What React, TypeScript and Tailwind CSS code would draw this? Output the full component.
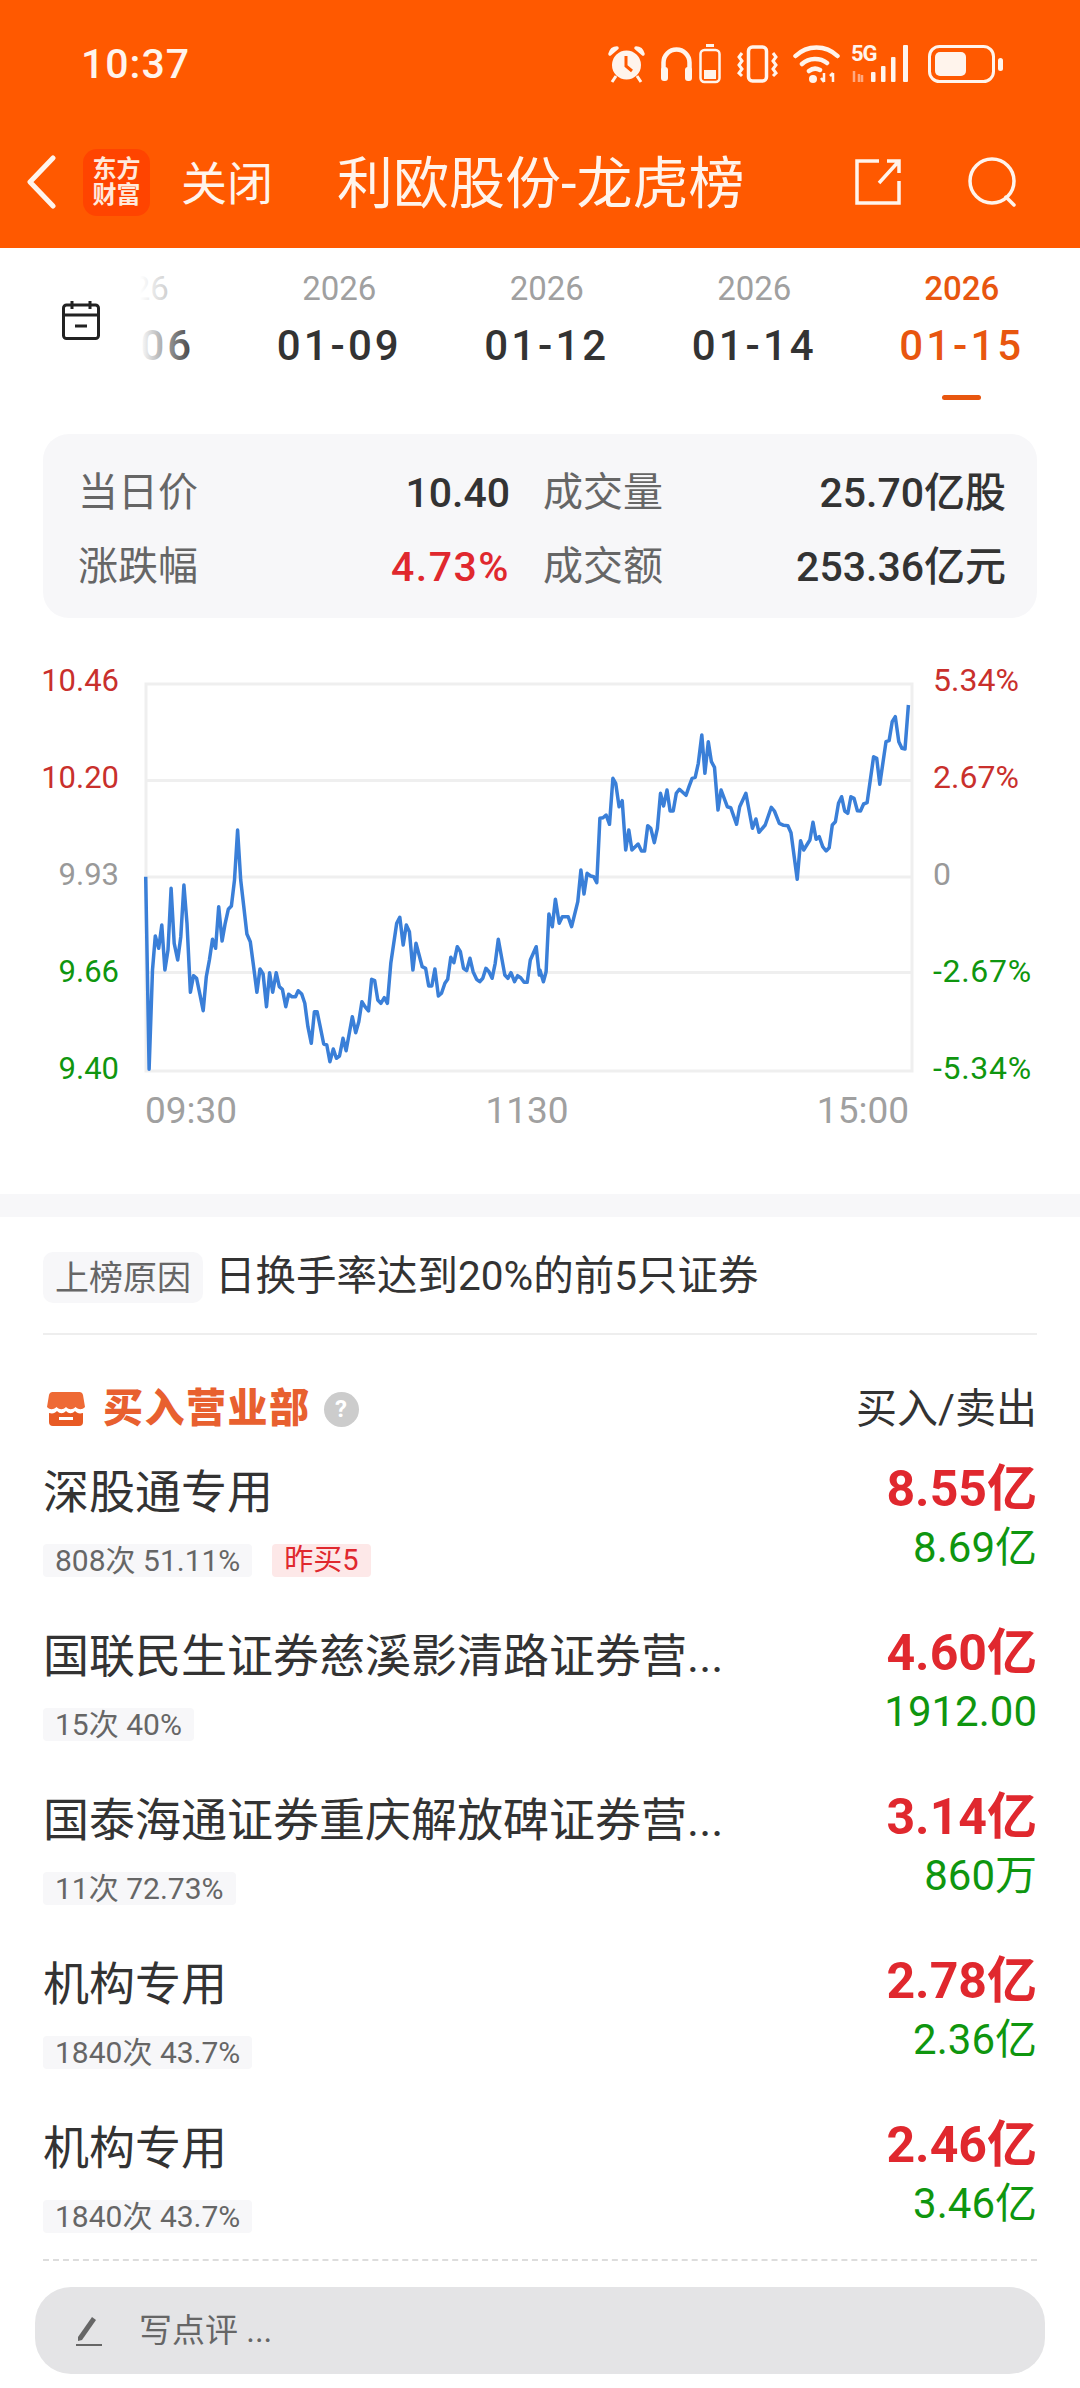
const leftPts = [423,680,433,1258,443,960,451,858,461,895,470,825,479,960,488,900,497,715,506,880,516,930,525,860,534,705,543,820,553,1027,562,977,571,985,580,1030,590,1082,599,980,608,930,617,868,626,895,635,770,645,873,654,820,663,778,672,768,681,690,690,540,699,690,708,770,717,852,727,875,736,945,746,1027,755,957,764,972,774,1070,783,968,792,1027,802,968,811,1010,820,1018,830,1070,838,1033,848,1040,858,1040,866,1022,876,1032,885,1060,894,1130,904,1180,913,1085,921,1085,930,1130,940,1182,949,1185,958,1235,968,1197,977,1225,986,1218,996,1165,1005,1202,1023,1100,1033,1148,1042,1115,1051,1055,1060,1070,1070,1083,1079,988,1088,992,1097,1050,1106,1060,1116,1043,1125,1060,1135,940,1152,820,1161,802,1171,885,1180,825,1189,845,1199,960,1208,880,1226,950,1236,955,1245,1008,1254,1008,1263,957,1273,1038,1282,1030,1292,1000,1300,988,1309,922,1318,938,1328,890,1337,905,1346,955,1355,962,1365,925,1374,965,1384,988,1393,995,1402,985,1411,955,1420,965,1429,985,1438,940,1447,868,1466,975,1475,985,1484,968,1494,995,1503,977,1512,983,1522,997,1531,997,1540,930,1557,890,1566,975];
const rightPts = [0,960,10,995,18,965,26,792,36,830,45,748,56,820,65,800,82,800,92,830,110,755,119,660,128,732,137,670,147,678,156,680,165,698,174,505,183,503,192,495,202,523,212,385,220,400,230,470,239,452,249,600,258,540,267,600,285,582,295,603,304,603,313,527,322,535,332,578,341,535,350,430,359,468,369,420,378,483,387,483,396,430,405,418,424,436,433,410,442,385,451,382,460,340,470,255,479,370,489,275,498,335,507,352,517,480,526,420,544,470,554,473,571,523,580,470,598,430,617,535,627,507,636,547,654,525,672,472,681,483,695,520,708,526,720,527,729,548,747,688,757,572,766,600,784,570,793,517,802,568,811,560,821,590,831,603,840,593,849,525,858,515,867,460,876,440,885,483,894,490,903,440,912,445,922,482,931,483,940,462,950,458,969,320,978,325,987,403,1005,275,1014,272,1023,215,1032,200,1042,275,1051,295,1060,297,1070,165];

function toLine() {
  const out: string[] = [];
  for (let i = 0; i < leftPts.length; i += 2) {
    out.push(`${(leftPts[i] / 2.904 - 146).toFixed(1)},${(leftPts[i + 1] / 3 - 34).toFixed(1)}`);
  }
  for (let i = 0; i < rightPts.length; i += 2) {
    out.push(`${((rightPts[i] + 1568) / 2.904 - 146).toFixed(1)},${(rightPts[i + 1] / 3 - 34).toFixed(1)}`);
  }
  return out.join(" ");
}

const rows = [
  { name: "深股通专用", tag: "808次 51.11%", extra: "昨买5", buy: "8.55亿", sell: "8.69亿" },
  { name: "国联民生证券慈溪影清路证券营...", tag: "15次 40%", buy: "4.60亿", sell: "1912.00" },
  { name: "国泰海通证券重庆解放碑证券营...", tag: "11次 72.73%", buy: "3.14亿", sell: "860万" },
  { name: "机构专用", tag: "1840次 43.7%", buy: "2.78亿", sell: "2.36亿" },
  { name: "机构专用", tag: "1840次 43.7%", buy: "2.46亿", sell: "3.46亿" },
];

const dates = [
  { d: "01-06" },
  { d: "01-09" },
  { d: "01-12" },
  { d: "01-14" },
  { d: "01-15", on: true },
];

function StatusIcons() {
  return (
    <div className="flex items-center h-[40px] text-[#fff4ec]">
      {/* alarm */}
      <svg width="37" height="38" viewBox="0 0 37 38" fill="none">
        <circle cx="18.5" cy="20" r="14.500" fill="currentColor" />
        <path d="M18 11v10l6 5" stroke="#ff5900" strokeWidth="3" />
        <path d="M2 9c1-4 4-6 7-6L2 9ZM35 9c-1-4-4-6-7-6l7 6Z" fill="currentColor" stroke="currentColor" strokeWidth="3.500" strokeLinejoin="round" />
        <path d="M8 31l-4 6M29 31l4 6" stroke="currentColor" strokeWidth="3" />
      </svg>
      {/* headphones */}
      <svg className="ml-[15px]" width="33" height="36" viewBox="0 0 33 36" fill="none">
        <path d="M3.500 26V16.500a13 13 0 0 1 26 0V26" stroke="currentColor" strokeWidth="4.500" />
        <rect x="1" y="21" width="7" height="14" rx="3" fill="currentColor" />
        <rect x="25" y="21" width="7" height="14" rx="3" fill="currentColor" />
      </svg>
      {/* small battery */}
      <svg className="ml-[6px]" width="22" height="40" viewBox="0 0 22 40" fill="none">
        <rect x="7" y="0" width="8" height="3" fill="currentColor" />
        <rect x="1.500" y="6" width="19" height="32" rx="4" stroke="currentColor" strokeWidth="2.500" />
        <rect x="5" y="26" width="12" height="9" fill="currentColor" />
      </svg>
      {/* vibrate */}
      <svg className="ml-[16px]" width="41" height="38" viewBox="0 0 41 38" fill="none">
        <rect x="11.500" y="2" width="18" height="34" rx="4" stroke="currentColor" strokeWidth="3.500" />
        <path d="M5 8 2 12l3 4-3 4 3 4-3 4 3 3M36 8l3 4-3 4 3 4-3 4 3 4-3 3" stroke="currentColor" strokeWidth="3" />
      </svg>
      {/* wifi */}
      <svg className="ml-[15px]" width="47" height="38" viewBox="0 0 47 38" fill="none">
        <path d="M2.500 11a30 30 0 0 1 42 0M9 19a20 20 0 0 1 25 -1M16 26a10 10 0 0 1 11 -1" stroke="currentColor" strokeWidth="4.500" strokeLinecap="round" />
        <circle cx="20" cy="34" r="4" fill="currentColor" />
        <path d="M31 28v9M28 33l3 4M40 37v-9M37 31l3-3" stroke="currentColor" strokeWidth="2.500" />
      </svg>
      {/* 5G + signal */}
      <div className="ml-[11px] relative w-[61px] h-[38px]">
        <svg className="absolute left-0 top-0" width="61" height="38" viewBox="0 0 61 38" fill="none">
          <path d="M3 26v11M8 37v-8M11 30v7" stroke="#ffa980" strokeWidth="2.500" />
          <rect x="20" y="27" width="4.500" height="10" rx="1" fill="currentColor" />
          <rect x="30" y="21" width="4.500" height="16" rx="1" fill="currentColor" />
          <rect x="40" y="12" width="4.500" height="25" rx="1" fill="currentColor" />
          <rect x="52" y="0" width="5" height="37" rx="1" fill="currentColor" />
        </svg>
        <span className="absolute left-0 top-[-4px] text-[22px] leading-[26px] font-bold tracking-[-1px]">5G</span>
      </div>
      {/* battery */}
      <svg className="ml-[16px]" width="75" height="38" viewBox="0 0 75 38" fill="none">
        <rect x="1.500" y="1.500" width="64" height="35" rx="10" stroke="currentColor" strokeWidth="3" />
        <rect x="7" y="7" width="31" height="24" rx="5" fill="currentColor" />
        <rect x="70" y="13" width="5" height="13" rx="2.500" fill="currentColor" />
      </svg>
    </div>
  );
}

export default function App() {
  return (
    <div className="w-[1080px] h-[2388px] overflow-hidden bg-white flex flex-col font-[Roboto,'Noto_Sans_CJK_SC',sans-serif]">
      {/* header */}
      <div className="h-[248px] bg-[#ff5900] text-white shrink-0">
        <div className="h-[128px] flex items-center justify-between pl-[81px] pr-[77px]">
          <span className="text-[41px] font-medium leading-none text-[#fff4ec] tracking-[1px]">10:37</span>
          <StatusIcons />
        </div>
        <div className="h-[108px] flex items-center pl-[26px] pr-[62px]">
          <svg width="30" height="54" viewBox="0 0 30 54" fill="none">
            <path d="M27 3 4 27l23 24" stroke="#fff4ec" strokeWidth="5" strokeLinecap="round" strokeLinejoin="round" />
          </svg>
          <div className="ml-[27px] w-[67px] h-[67px] rounded-[14px] bg-[#ff4400] flex flex-col items-center justify-center text-[24px] leading-[26px] font-bold text-[#ffe9dc]">
            <span>东方</span>
            <span>财富</span>
          </div>
          <span className="ml-[31px] mt-[4px] text-[46px] leading-none text-[#fff4ec]">关闭</span>
          <span className="ml-[64px] mt-[4px] text-[56px] leading-none text-[#fff4ec] whitespace-nowrap">利欧股份-龙虎榜</span>
          <svg className="ml-auto" width="46" height="46" viewBox="0 0 46 46" fill="none">
            <path d="M24 2H2v42h42V22M44 2 24 24M32 2h12v12" stroke="#fff4ec" strokeWidth="3.500" />
          </svg>
          <svg className="ml-[67px]" width="50" height="50" viewBox="0 0 50 50" fill="none">
            <circle cx="24" cy="24" r="22" stroke="#fff4ec" strokeWidth="3.500" />
            <path d="M38 40l8 8" stroke="#fff4ec" strokeWidth="3.500" strokeLinecap="round" />
          </svg>
        </div>
      </div>

      {/* date tabs */}
      <div className="h-[186px] shrink-0 flex items-start">
        <svg className="ml-[62px] mt-[52px] shrink-0" width="38" height="40" viewBox="0 0 38 40" fill="none">
          <rect x="1.500" y="5" width="35" height="33.500" rx="3" stroke="#222" strokeWidth="3" />
          <path d="M1.500 15h35M10 1v8M28 1v8M13 26h12" stroke="#222" strokeWidth="3" />
        </svg>
        <div className="relative ml-[40px] w-[926px] h-[160px] overflow-hidden">
          <div className="flex ml-[-112px]">
            {dates.map((t) => (
              <div key={t.d} className="w-[207.5px] shrink-0 flex flex-col items-center pt-[21px]">
                <span className={`text-[33px] leading-[40px] ${t.on ? "text-[#e8560f] font-medium" : "text-[#a0a0a0]"}`}>2026</span>
                <span className={`mt-[13px] text-[42px] leading-[48px] tracking-[3px] font-medium ${t.on ? "text-[#e8560f]" : "text-[#333333]"}`}>{t.d}</span>
                {t.on && <div className="mt-[25px] w-[39px] h-[5px] rounded-full bg-[#e8560f]" />}
              </div>
            ))}
          </div>
          <div className="absolute left-0 top-0 h-full w-[56px] bg-gradient-to-r from-white to-transparent" />
        </div>
      </div>

      {/* stats */}
      <div className="mx-[43px] h-[184px] shrink-0 rounded-[26px] bg-[#f7f7f9] pt-[22px] pl-[35px]">
        <div className="grid grid-cols-[432px_463px] gap-x-[33px] auto-rows-[74px] items-center text-[40px] leading-none">
          <div className="flex justify-between items-center">
            <span className="text-[#666666]">当日价</span>
            <span className="text-[#333333] font-medium text-[41px]">10.40</span>
          </div>
          <div className="flex justify-between items-center">
            <span className="text-[#666666]">成交量</span>
            <span className="text-[#333333] font-medium text-[41px]">25.70亿股</span>
          </div>
          <div className="flex justify-between items-center">
            <span className="text-[#666666]">涨跌幅</span>
            <span className="text-[#e0282e] font-medium text-[41px] tracking-[1.500px]">4.73%</span>
          </div>
          <div className="flex justify-between items-center">
            <span className="text-[#666666]">成交额</span>
            <span className="text-[#333333] font-medium text-[41px]">253.36亿元</span>
          </div>
        </div>
      </div>

      {/* chart */}
      <div className="h-[576px] shrink-0 pt-[42px]">
        <div className="flex items-start">
          <div className="w-[119px] mt-[1px] flex flex-col gap-[57px] items-end text-[31px] leading-[40px]">
            <span className="text-[#c9302c]">10.46</span>
            <span className="text-[#c9302c]">10.20</span>
            <span className="text-[#999999]">9.93</span>
            <span className="text-[#0f960f]">9.66</span>
            <span className="text-[#0f960f]">9.40</span>
          </div>
          <svg className="ml-[27px] mt-[24px] overflow-visible shrink-0" width="766" height="387" viewBox="0 0 766 387" fill="none">
            <path d="M0 0H766V387H0ZM0 96.500H766M0 193H766M0 288.500H766" stroke="#efefef" strokeWidth="3" />
            <polyline points={toLine()} stroke="#3a7fd8" strokeWidth="3.500" strokeLinejoin="round" />
          </svg>
          <div className="ml-[21px] flex flex-col gap-[57px] text-[32px] leading-[40px] whitespace-nowrap">
            <span className="text-[#c9302c]">5.34%</span>
            <span className="text-[#c9302c]">2.67%</span>
            <span className="text-[#999999]">0</span>
            <span className="text-[#0f960f] tracking-[0.7px]">-2.67%</span>
            <span className="text-[#0f960f] tracking-[0.7px]">-5.34%</span>
          </div>
        </div>
        <div className="ml-[145px] w-[766px] mt-[2px] pr-[2px] flex justify-between text-[37px] leading-[40px] text-[#a0a0a0]">
          <span>09:30</span>
          <span>1130</span>
          <span>15:00</span>
        </div>
      </div>
      <div className="h-[23px] shrink-0 bg-[#f7f7f9]" />

      {/* reason */}
      <div className="mt-[35px] mx-[43px] flex items-center gap-[12px] shrink-0">
        <span className="h-[51px] w-[160px] rounded-[10px] bg-[#f7f7f9] flex items-center justify-center text-[34px] leading-none text-[#666666]">上榜原因</span>
        <span className="mb-[3px] text-[40.5px] leading-none text-[#333333] whitespace-nowrap">日换手率达到20%的前5只证券</span>
      </div>
      <div className="mt-[30px] mx-[43px] h-[2px] shrink-0 bg-[#eeeeee]" />

      {/* list header */}
      <div className="mt-[54px] mx-[43px] h-[40px] shrink-0 flex items-center">
        <svg className="ml-[4px]" width="38" height="34" viewBox="0 0 38 34" fill="none">
          <path d="M6 0h26a4 4 0 0 1 4 3l2 12c-3 3-6 3-9.500 0-3 3-6.500 3-9.500 0-3 3-6.500 3-9.500 0-3.500 3-6.500 3-9.500 0l2-12a4 4 0 0 1 4-3Z" fill="#ee6a35" />
          <path d="M2 21c4 1 6 0 8-2 3 3 6 3 9 0 3 3 6 3 9 0 2 2 4 3 8 2v9a4 4 0 0 1-4 4H6a4 4 0 0 1-4-4Z" fill="#e85a24" />
          <rect x="12" y="25" width="14" height="3" fill="#ffffff" />
        </svg>
        <span className="ml-[18px] text-[40px] leading-none font-black text-[#e8602f] tracking-[1.500px]">买入营业部</span>
        <span className="ml-[13px] w-[35px] h-[35px] rounded-full bg-[#cccccc] text-white text-[24px] font-bold flex items-center justify-center">?</span>
        <span className="ml-auto text-[41px] leading-none text-[#333333]">买入/卖出</span>
      </div>

      {/* list */}
      <div className="mt-[33px] mx-[43px] shrink-0">
        {rows.map((r, i) => (
          <div key={i} className={`flex justify-between items-start ${i === 4 ? "h-[139px]" : "h-[164px]"}`}>
            <div>
              <div className="h-[60px] flex items-center text-[46px] leading-none text-[#333333] whitespace-nowrap">{r.name}</div>
              <div className="mt-[22px] flex gap-[20px]">
                <span className="h-[33px] px-[12px] rounded-[4px] bg-[#f7f7f9] flex items-center text-[30px] leading-none text-[#666666]">{r.tag}</span>
                {r.extra && <span className="h-[33px] px-[12px] rounded-[4px] bg-[#fde8e8] flex items-center text-[29px] leading-none text-[#e0282e]">{r.extra}</span>}
              </div>
            </div>
            <div className="-mt-[1px] flex flex-col items-end">
              <span className="h-[56px] flex items-center text-[50px] leading-none font-bold text-[#e0282e]">{r.buy}</span>
              <span className="mt-[9px] h-[44px] flex items-center text-[42px] leading-none text-[#0f960f]">{r.sell}</span>
            </div>
          </div>
        ))}
      </div>

      <div className="mt-[2px] mx-[43px] shrink-0 border-t-2 border-dashed border-[#dddddd]" />

      {/* comment bar */}
      <div className="mt-[26px] mx-[35px] h-[87px] shrink-0 rounded-[36px] bg-[#e4e4e6] flex items-center pl-[41px]">
        <svg width="26" height="30" viewBox="0 0 26 30" fill="none">
          <path d="M2 21 16 1l4 3L6 24l-4 1Z" fill="#666666" />
          <rect x="0" y="28" width="26" height="2.500" fill="#666666" />
        </svg>
        <span className="ml-[37px] text-[33px] leading-none text-[#666666]">写点评 ...</span>
      </div>
    </div>
  );
}
